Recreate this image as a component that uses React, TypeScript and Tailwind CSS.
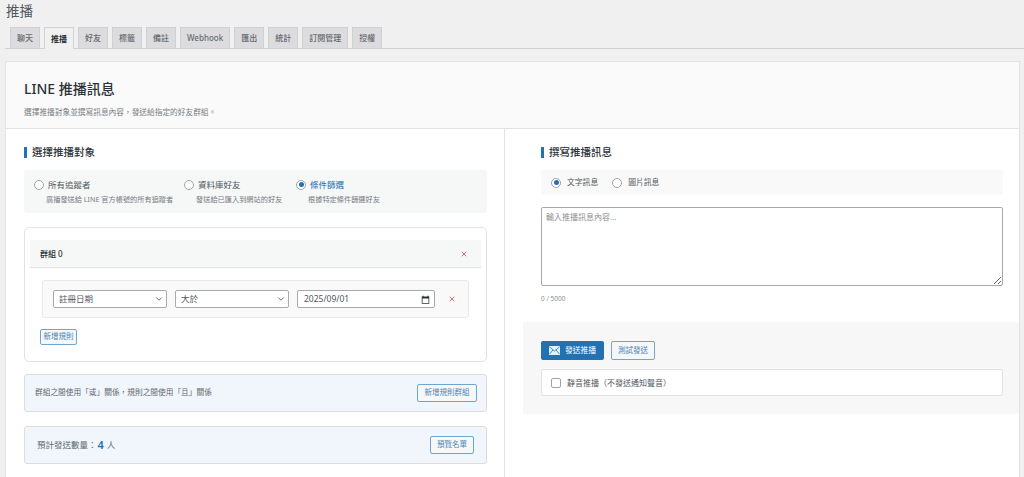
import { ChevronDown, X } from "lucide-react"

const tabs = ["聊天", "推播", "好友", "標籤", "備註", "Webhook", "匯出", "統計", "訂閱管理", "授權"]

function Radio({ checked }: { checked?: boolean }) {
  return (
    <span className="flex h-[10px] w-[10px] shrink-0 items-center justify-center rounded-full border border-[#a0a3a8] bg-white">
      {checked && <span className="h-[5px] w-[5px] rounded-full bg-[#2271b1]" />}
    </span>
  )
}

function SectionTitle({ children }: { children: string }) {
  return (
    <h2 className="border-l-[3px] border-[#2271b1] pl-[5px] text-[10.5px] leading-[11px] font-medium text-[#2c3338]">
      {children}
    </h2>
  )
}

function Target({ label, desc, checked, width }: { label: string; desc: string; checked?: boolean; width: string }) {
  return (
    <div className={width}>
      <div className="flex items-center gap-[4px]">
        <Radio checked={checked} />
        <span className={`text-[8.5px] leading-[12px] ${checked ? "text-[#2271b1]" : "text-[#50575e]"}`}>{label}</span>
      </div>
      <p className="mt-[2px] pl-[12px] text-[7.2px] leading-[12px] whitespace-nowrap text-[#787c82]">{desc}</p>
    </div>
  )
}

function SelectBox({ value, className }: { value: string; className: string }) {
  return (
    <div className={`relative ${className}`}>
      <select className="block h-[18px] w-full appearance-none rounded-[2px] border border-[#a7aaad] bg-white pl-[5px] text-[8.5px] text-[#50575e] outline-none">
        <option>{value}</option>
      </select>
      <ChevronDown className="pointer-events-none absolute top-[4px] right-[3px] h-[10px] w-[10px] text-[#50575e]" strokeWidth={2} />
    </div>
  )
}

function OutlineButton({ children, className }: { children: string; className: string }) {
  return (
    <button className={`flex items-center justify-center rounded-[2px] border border-[#6ea6d3] bg-[#f6f7f7] text-[7.5px] text-[#4a86b8] ${className}`}>
      {children}
    </button>
  )
}

export default function App() {
  return (
    <div className="h-screen overflow-hidden bg-[#f0f0f1] font-['Noto_Sans','Noto_Sans_CJK_TC',sans-serif]">
      <h1 className="px-[6px] pt-[2px] text-[13.5px] leading-[18px] text-[#50575e]">推播</h1>

      <div className="mt-[7px] ml-[5px] flex h-[22px] gap-[4px] border-b border-[#d0d1d4] pl-[5px]">
        {tabs.map((tab) => (
          <div
            key={tab}
            className={
              tab === "推播"
                ? "relative z-10 flex h-[22px] items-center border border-b-0 border-[#d0d1d4] bg-[#f0f0f1] px-[6px] text-[8px] font-bold text-[#2c3338]"
                : "flex h-[21px] items-center border border-b-0 border-[#d0d1d4] bg-[#dcdcde] px-[6px] text-[8px] font-medium text-[#646970]"
            }
          >
            {tab}
          </div>
        ))}
      </div>

      <div className="mt-[12px] mr-[4px] ml-[5px] border border-[#e2e2e4] bg-white">
        <div className="h-[67px] border-b border-[#e2e2e4] bg-[#fafafa] pt-[17px] pl-[18px]">
          <div className="text-[14px] leading-[20px] font-medium text-[#2c3338]">LINE 推播訊息</div>
          <p className="mt-[7px] text-[7.7px] leading-[12px] text-[#787c82]">選擇推播對象並撰寫訊息內容，發送給指定的好友群組。</p>
        </div>

        <div className="flex">
          <div className="w-[499px] shrink-0 border-r border-[#e2e2e4] pt-[18px] pr-[17px] pb-[40px] pl-[18px]">
            <SectionTitle>選擇推播對象</SectionTitle>

            <div className="mt-[12px] flex h-[43px] items-center rounded-[3px] bg-[#f6f7f7] pl-[10px]">
              <Target width="w-[150px]" label="所有追蹤者" desc="廣播發送給 LINE 官方帳號的所有追蹤者" />
              <Target width="w-[112px]" label="資料庫好友" desc="發送給已匯入到網站的好友" />
              <Target width="w-[140px]" label="條件篩選" desc="根據特定條件篩選好友" checked />
            </div>

            <div className="mt-[14px] h-[135px] rounded-[5px] border border-[#e2e2e4] px-[5px] pt-[12px]">
              <div className="flex h-[28px] items-center justify-between border-b border-[#e2e2e4] bg-[#f6f7f7] pr-[13px] pl-[10px]">
                <span className="text-[8px] font-medium text-[#2c3338]">群組 0</span>
                <X className="h-[8px] w-[8px] text-[#e0484a]" strokeWidth={2.5} />
              </div>

              <div className="mx-[12px] mt-[12px] flex h-[38px] items-center gap-[8px] rounded-[3px] border border-[#e8e8e8] bg-[#f9f9f9] pl-[10px]">
                <SelectBox className="w-[114px]" value="註冊日期" />
                <SelectBox className="w-[114px]" value="大於" />
                <div className="flex h-[18px] w-[138px] items-center justify-between rounded-[2px] border border-[#a7aaad] bg-white pr-[4px] pl-[6px] text-[8.5px] text-[#50575e]">
                  <span>2025/09/01</span>
                  <svg className="h-[9px] w-[9px]" viewBox="0 0 12 12" fill="#2c3338">
                    <path d="M2 1h1.5v1h5V1H10v1h1v9.5H1V2h1V1zm0 3.5V10.5h8V4.5H2z" />
                  </svg>
                </div>
                <X className="ml-[5px] h-[8px] w-[8px] text-[#e0484a]" strokeWidth={2.5} />
              </div>

              <OutlineButton className="mt-[11px] ml-[10px] h-[16px] w-[37px]">新增規則</OutlineButton>
            </div>

            <div className="mt-[12px] flex h-[38px] items-center justify-between rounded-[3px] border border-[#dcdcde] bg-[#f0f6fc] pr-[9px] pl-[10px]">
              <span className="text-[7.7px] text-[#646970]">群組之間使用「或」關係，規則之間使用「且」關係</span>
              <OutlineButton className="h-[18px] w-[60px]">新增規則群組</OutlineButton>
            </div>

            <div className="mt-[14px] flex h-[38px] items-center justify-between rounded-[3px] border border-[#dcdcde] bg-[#f0f6fc] pr-[12px] pl-[12px]">
              <span className="flex items-center text-[8.5px] text-[#646970]">
                預計發送數量：
                <span className="mr-[3px] ml-[1px] text-[11px] font-semibold text-[#2271b1]">4</span>人
              </span>
              <OutlineButton className="h-[18px] w-[44px]">預覽名單</OutlineButton>
            </div>
          </div>

          <div className="min-w-0 flex-1 pt-[18px]">
            <div className="pr-[16px] pl-[36px]">
              <SectionTitle>撰寫推播訊息</SectionTitle>

              <div className="mt-[12px] flex h-[25px] items-center rounded-[3px] bg-[#f9f9f9] pl-[10px]">
                <Radio checked />
                <span className="mr-[14px] ml-[6px] text-[7.8px] text-[#50575e]">文字訊息</span>
                <Radio />
                <span className="ml-[6px] text-[7.8px] text-[#50575e]">圖片訊息</span>
              </div>

              <textarea
                className="mt-[12px] block h-[79px] w-full rounded-[2px] border border-[#a7aaad] bg-white px-[4px] py-[3px] text-[8px] leading-[12px] outline-none placeholder:text-[#8c8f94]"
                placeholder="輸入推播訊息內容..."
              />
              <p className="mt-[7px] text-[6.5px] leading-[12px] text-[#8c8f94]">0 / 5000</p>
            </div>

            <div className="mt-[17px] ml-[18px] h-[92px] bg-[#f7f7f7] pt-[19px] pr-[16px] pl-[18px]">
              <div className="flex gap-[7px]">
                <button className="flex h-[19px] w-[63px] items-center justify-center gap-[5px] rounded-[2px] bg-[#2271b1] text-[7.8px] text-white">
                  <svg className="h-[9px] w-[11px]" viewBox="0 0 11 9">
                    <rect width="11" height="9" rx="0.5" fill="#e8f0f7" />
                    <path d="M0.5 1l5 4 5-4M0.5 8l3.5-4M10.5 8l-3.5-4" fill="none" stroke="#2271b1" strokeWidth="0.8" />
                  </svg>
                  發送推播
                </button>
                <OutlineButton className="h-[19px] w-[44px]">測試發送</OutlineButton>
              </div>
              <div className="mt-[9px] flex h-[27px] items-center rounded-[2px] border border-[#e2e2e4] bg-white pl-[9px]">
                <span className="h-[10px] w-[10px] rounded-[2px] border border-[#a0a3a8] bg-white" />
                <span className="ml-[6px] text-[8px] text-[#50575e]">靜音推播（不發送通知聲音）</span>
              </div>
            </div>
          </div>
        </div>
      </div>
    </div>
  )
}
